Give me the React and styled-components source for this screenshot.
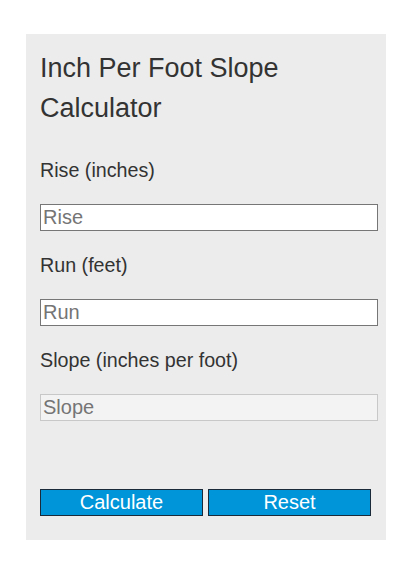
import React from "react";
import styled, { createGlobalStyle } from "styled-components";

const Global = createGlobalStyle`
  html, body { margin: 0; padding: 0; background: #fff; }
  body { font-family: "Liberation Sans", Arial, sans-serif; }
  * { box-sizing: border-box; }
`;

const Page = styled.div`
  padding: 34px 0 0 26px;
`;

const Panel = styled.div`
  width: 360px;
  background: #ececec;
  padding: 14px 14px 24px 14px;
  color: #333;
`;

const Title = styled.h1`
  margin: 0;
  font-size: 27px;
  font-weight: normal;
  line-height: 40px;
`;

const Label = styled.label`
  display: block;
  font-size: 19.7px;
  line-height: 24px;
  margin-top: ${(p) => p.$top}px;
`;

const Input = styled.input`
  display: block;
  width: 338px;
  height: 27px;
  margin: 22px 0 0 0;
  padding: 0 2px;
  font-family: "Liberation Sans", Arial, sans-serif;
  font-size: 20px;
  color: #333;
  background: ${(p) => (p.readOnly ? "#f3f3f3" : "#fff")};
  border: 1px solid ${(p) => (p.readOnly ? "#c8c8c8" : "#767676")};
  border-radius: 0;
  outline: none;
  &::placeholder { color: #757575; opacity: 1; }
`;

const Buttons = styled.div`
  display: flex;
  gap: 5px;
  margin-top: 68px;
`;

const Button = styled.button`
  width: 163px;
  height: 27px;
  padding: 0;
  font-family: "Liberation Sans", Arial, sans-serif;
  font-size: 20px;
  line-height: 25px;
  color: #fff;
  background: #0095d9;
  border: 1px solid #1a2a38;
  border-radius: 0;
`;

export default function App() {
  return (
    <>
      <Global />
      <Page>
        <Panel>
          <Title>Inch Per Foot Slope Calculator</Title>
          <Label $top={30}>Rise (inches)</Label>
          <Input placeholder="Rise" />
          <Label $top={22}>Run (feet)</Label>
          <Input placeholder="Run" />
          <Label $top={22}>Slope (inches per foot)</Label>
          <Input placeholder="Slope" readOnly />
          <Buttons>
            <Button>Calculate</Button>
            <Button>Reset</Button>
          </Buttons>
        </Panel>
      </Page>
    </>
  );
}
